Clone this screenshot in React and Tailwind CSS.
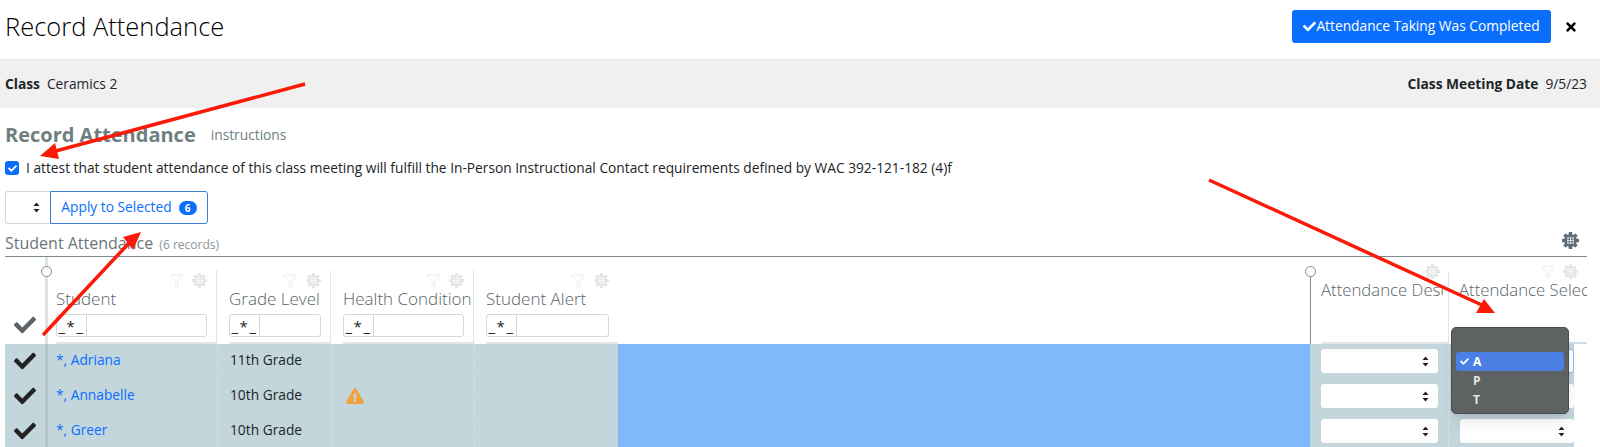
import { FaCheck, FaTimes, FaExclamationTriangle } from 'react-icons/fa';
import { Filter } from 'lucide-react';

const GRID = 'grid grid-cols-[43px_169px_114px_143px_144px_1fr_138px_139px]';

const columns = ['Student', 'Grade Level', 'Health Condition', 'Student Alert'];

const students = [
  { name: '*, Adriana', grade: '11th Grade', focused: true },
  { name: '*, Annabelle', grade: '10th Grade', alert: true },
  { name: '*, Greer', grade: '10th Grade' },
];

const Carets = () => (
  <svg width="7" height="11" viewBox="0 0 7 11">
    <path d="M3.5 0.5 L6.5 4 L0.5 4 Z M3.5 10.5 L0.5 7 L6.5 7 Z" fill="#222" />
  </svg>
);

// gear with a small grid cut in the middle
const GridCog = ({ size = 15, className = '' }) => (
  <svg width={size} height={size} viewBox="0 0 16 16" className={className}>
    <g fill="currentColor">
      <circle cx="8" cy="8" r="6" />
      {[0, 45, 90, 135].map(a => (
        <rect key={a} x="6.3" y="0" width="3.4" height="16" rx="0.6" transform={`rotate(${a} 8 8)`} />
      ))}
    </g>
    <path d="M5 5.5H11M5 8H11M5 10.5H11M5.5 5V11M8 5V11M10.5 5V11" stroke="#fff" strokeWidth="0.8" opacity="0.85" />
  </svg>
);

const RowSelect = ({ focused }) => (
  <div className={`h-[24px] w-full bg-white rounded-[3px] flex items-center justify-end pr-[9px] ${focused ? 'border border-[#86b7fe]' : ''}`}>
    <Carets />
  </div>
);

const ColTools = ({ noFilter }) => (
  <div className="h-[20px] flex items-center justify-end gap-[8px] text-[#e3e6e6] shrink-0">
    {!noFilter && <Filter size={15} strokeWidth={1.25} />}
    <GridCog size={15} />
  </div>
);

const FilterBox = () => (
  <div className="h-[23px] flex border border-[#d3d8dc] rounded-[3px] bg-white text-[#222] overflow-hidden">
    <div className="w-[30px] border-r border-[#d3d8dc] text-[15px] leading-[22px] text-center tracking-[1.5px]">_*_</div>
  </div>
);

const Arrow = ({ d, head }) => (
  <>
    <path d={d} stroke="#fb1a08" strokeWidth="3.5" fill="none" />
    <polygon points={head} fill="#fb1a08" />
  </>
);

export default function App() {
  return (
    <div className="relative w-[1600px] h-[447px] overflow-hidden bg-white font-['Open_Sans',sans-serif] text-[#212529]">
      <div className="h-[59px] flex items-center justify-between pl-[5px] pr-[22px] pb-[6px]">
        <h1 className="text-[25.5px] font-light text-black">Record Attendance</h1>
        <div className="flex items-center gap-[13px]">
          <button className="h-[33px] w-[259px] bg-[#0a6efd] rounded-[3px] text-white text-[13.75px] flex items-center justify-center">
            <FaCheck size={13} />Attendance Taking Was Completed
          </button>
          <FaTimes size={14} className="text-black" />
        </div>
      </div>

      <div className="h-[49px] bg-[#f0f0f0] border-t border-[#e9e9e9] flex items-center justify-between pl-[5px] pr-[13px] text-[13.75px]">
        <div><span className="font-bold mr-[7px]">Class</span>Ceramics 2</div>
        <div><span className="font-bold mr-[7px]">Class Meeting Date</span>9/5/23</div>
      </div>

      <div className="pl-[5px] pr-[13px]">
        <div className="h-[51px] flex items-center pt-[2px]">
          <h2 className="text-[20px] font-bold text-[#6f7f7f]">Record Attendance</h2>
          <span className="ml-[15px] mt-[2px] text-[13.75px] text-[#6f7f7f]">instructions</span>
        </div>

        <div className="flex items-center h-[18px] text-[13.75px]">
          <span className="w-[14px] h-[14px] bg-[#0a6efd] rounded-[3px] flex items-center justify-center text-white">
            <FaCheck size={9} />
          </span>
          <span className="ml-[7px]">I attest that student attendance of this class meeting will fulfill the In-Person Instructional Contact requirements defined by WAC 392-121-182 (4)f</span>
        </div>

        <div className="mt-[14px] flex h-[33px] w-[203px] text-[13.75px]">
          <div className="w-[45px] border border-r-0 border-[#d3d8dc] rounded-l-[3px] flex items-center justify-end pr-[10px]">
            <Carets />
          </div>
          <div className="flex-1 border border-[#3f7fdc] rounded-r-[3px] flex items-center justify-center gap-[7px] text-[#0a6efd]">
            Apply to Selected
            <span className="w-[18px] h-[14px] rounded-full bg-[#0a6efd] text-white text-[10px] font-bold leading-[14px] text-center">6</span>
          </div>
        </div>

        <div className="h-[33px] border-b border-[#7d8b95] flex items-end justify-between pb-[1px]">
          <div className="text-[#6a7679] text-[16px] leading-[20px]">
            Student Attendance <span className="text-[12px] ml-[2px] text-[#8b9597]">(6 records)</span>
          </div>
          <GridCog size={17} className="text-[#5f6b78] mr-[8px] mb-[6px]" />
        </div>

        <div className={`${GRID} h-[87px]`}>
          <div className="flex items-end justify-center pb-[8px] text-[#5b6368] border-r-[3px] border-[#dfe3e6]">
            <FaCheck size={22} />
          </div>
          {columns.map((c, i) => (
            <div key={c} className={`mt-[13px] ${i === 0 ? 'pl-[8px]' : 'pl-[12px]'} ${i < 3 ? 'border-r border-[#e3e6e6]' : ''}`}>
              <div className="h-full border-b-2 border-[#e3e6e6] pr-[9px]">
                <ColTools />
                <div className="text-[17px] font-light leading-[24px] whitespace-nowrap overflow-hidden text-[#5a6468] -mt-[3px] -mr-[9px]">{c}</div>
                <div className="mt-[3px]"><FilterBox /></div>
              </div>
            </div>
          ))}
          <div />
          <div className="mt-[14px] border-l border-[#7d8b95] pl-[10px]">
            <div className="-mt-[10px] h-[83px] border-b-2 border-[#e3e6e6] overflow-hidden">
              <div className="pr-[8px]"><ColTools noFilter /></div>
              <div className="text-[16.75px] font-light leading-[24px] whitespace-nowrap overflow-hidden mr-[5px] text-[#5a6468] -mt-[3px]">Attendance Description</div>
            </div>
          </div>
          <div className="mt-[14px] border-l border-[#e3e6e6] pl-[10px]">
            <div className="-mt-[10px] h-[83px] border-b-2 border-[#cfdde8] overflow-hidden">
              <div className="pr-[9px]"><ColTools /></div>
              <div className="text-[16.75px] font-light leading-[24px] whitespace-nowrap text-[#5a6468] -mt-[3px]">Attendance Selection</div>
            </div>
          </div>
        </div>

        {students.map(s => (
          <div key={s.name} className={`${GRID} h-[35px] text-[13.75px]`}>
            <div className="bg-[#c2d6dc] flex items-center justify-center pb-[2px] text-[#222] border-r-[3px] border-[#b3c3ca]">
              <FaCheck size={22} />
            </div>
            <div className="bg-[#c2d6dc] pl-[8px] pb-[2px] flex items-center text-[#0a6efd]">{s.name}</div>
            <div className="bg-[#c2d6dc] pl-[12px] pb-[2px] flex items-center border-l border-dashed border-[#d5e2e6]">{s.grade}</div>
            <div className="bg-[#c2d6dc] pl-[14px] pb-[2px] flex items-center border-l border-dashed border-[#d5e2e6]">
              {s.alert && <FaExclamationTriangle size={18} className="text-[#f0a33c]" />}
            </div>
            <div className="bg-[#c2d6dc] border-l border-dashed border-[#d5e2e6]" />
            <div className="bg-[#80b8fc]" />
            <div className="bg-[#c2d6dc] pl-[11px] pr-[10px] pb-[1px] flex items-center"><RowSelect /></div>
            <div className="flex">
              <div className="w-[126px] bg-[#c2d6dc] pl-[11px] pb-[1px] flex items-center border-l border-dashed border-[#d5e2e6]">
                <RowSelect focused={s.focused} />
              </div>
            </div>
          </div>
        ))}
      </div>

      <span className="absolute left-[41px] top-[266px] w-[11px] h-[11px] rounded-full border border-[#7d8b95] bg-white" />
      <span className="absolute left-[1305px] top-[266px] w-[11px] h-[11px] rounded-full border border-[#7d8b95] bg-white" />

      <div className="absolute left-[1451px] top-[327px] w-[118px] h-[87px] rounded-[5px] bg-[#5f6263] border border-[#4a4c4d] shadow-lg pt-[24px] px-[4px] text-[12px] font-bold text-[#e4e6e6]">
        <div className="h-[19px] rounded-[3px] bg-[#4a7fe3] flex items-center text-white">
          <FaCheck size={9} className="ml-[4px] mr-[4px]" />A
        </div>
        <div className="h-[19px] flex items-center pl-[17px]">P</div>
        <div className="h-[19px] flex items-center pl-[17px]">T</div>
      </div>

      <svg className="absolute inset-0 pointer-events-none" width="1600" height="447">
        <Arrow d="M305 84 L52 152" head="40,156 55,143 59,159" />
        <Arrow d="M43 335 L130 242" head="141,232 123,237 133,250" />
        <Arrow d="M1209 180 L1484 306" head="1495,313 1476,313 1484,299" />
      </svg>
    </div>
  );
}
